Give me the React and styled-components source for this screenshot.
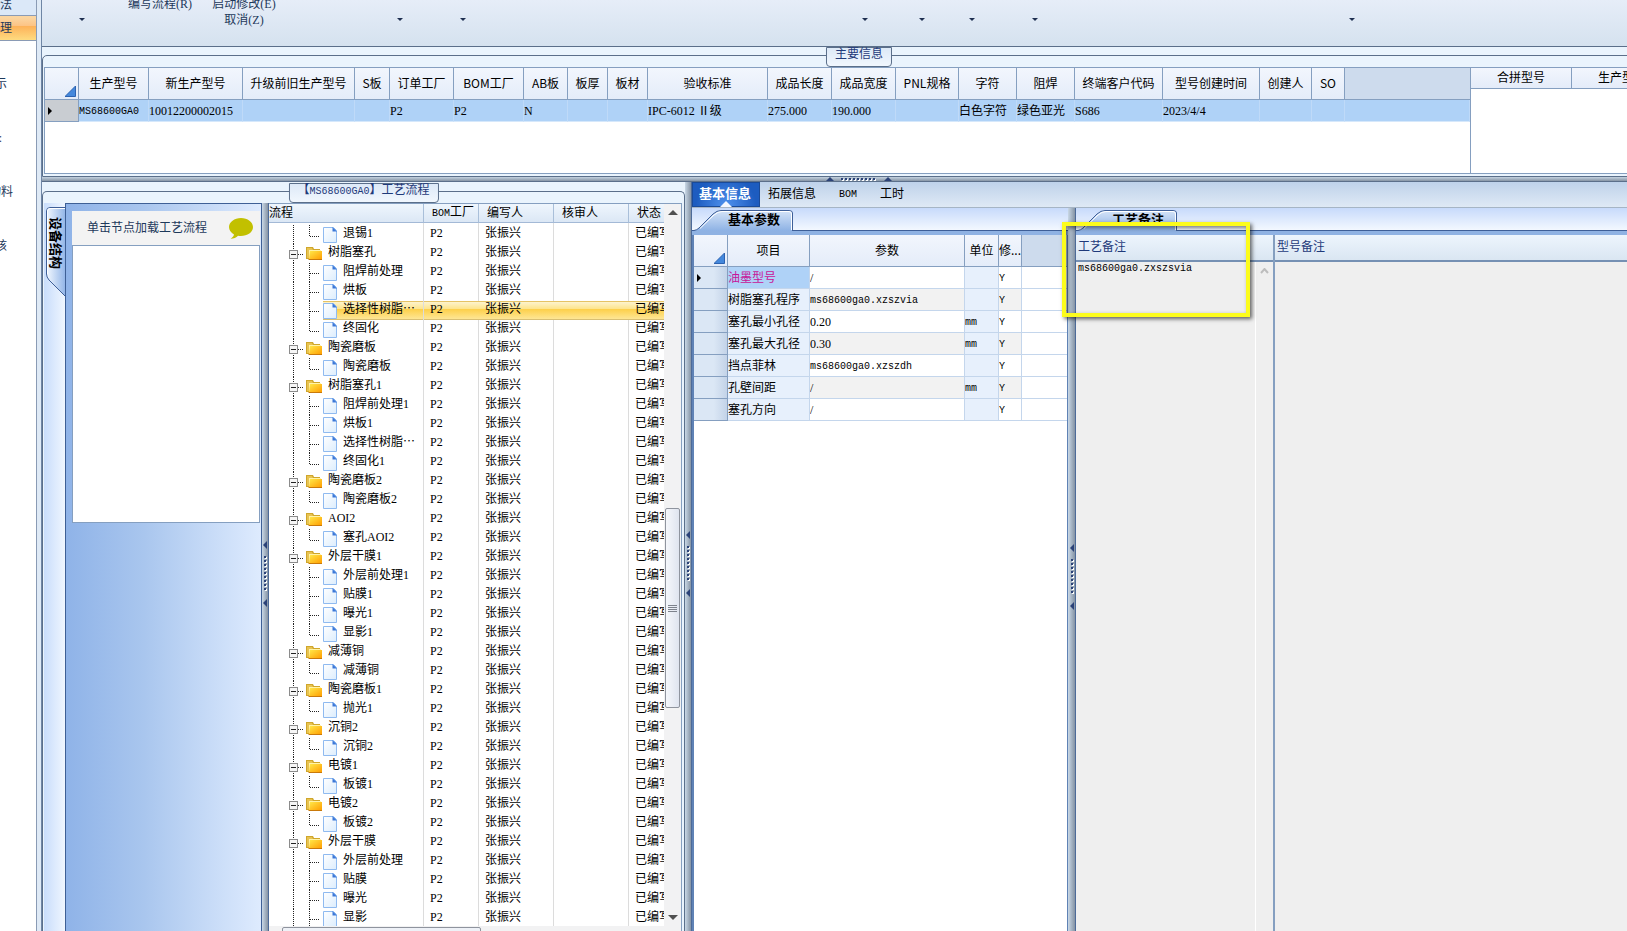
import React, { useState } from 'react';
import styled, { createGlobalStyle, css } from 'styled-components';

const ribbonGroups = [
  { width: 74 },
  { width: 88, lines: ['编写流程(R)'] },
  { width: 80, lines: ['启动修改(E)', '取消(Z)'] },
];

const ribbonArrows = [82, 400, 463, 865, 922, 972, 1035, 1352];

const sideItems = [
  { text: '示', pad: 29 },
  { text: ':', pad: 34 },
  { text: '物料', pad: 23 },
  { text: '核', pad: 29 },
];

const mainColumns = [
  { title: '生产型号', width: 70, value: 'MS68600GA0', code: true },
  { title: '新生产型号', width: 94, value: '10012200002015' },
  { title: '升级前旧生产型号', width: 112, value: '' },
  { title: 'S板', width: 35, value: '' },
  { title: '订单工厂', width: 64, value: 'P2' },
  { title: 'BOM工厂', width: 70, value: 'P2' },
  { title: 'AB板', width: 44, value: 'N' },
  { title: '板厚', width: 40, value: '' },
  { title: '板材', width: 40, value: '' },
  { title: '验收标准', width: 120, value: 'IPC-6012 Ⅱ级' },
  { title: '成品长度', width: 64, value: '275.000' },
  { title: '成品宽度', width: 64, value: '190.000' },
  { title: 'PNL规格', width: 63, value: '' },
  { title: '字符', width: 58, value: '白色字符' },
  { title: '阻焊', width: 58, value: '绿色亚光' },
  { title: '终端客户代码', width: 88, value: 'S686' },
  { title: '型号创建时间', width: 97, value: '2023/4/4' },
  { title: '创建人', width: 52, value: '' },
  { title: 'SO', width: 33, value: '' },
];

const flow = [
  { name: null, children: ['退锡1'] },
  { name: '树脂塞孔', children: ['阻焊前处理', '烘板', '选择性树脂⋯', '终固化'], selected: 2 },
  { name: '陶瓷磨板', children: ['陶瓷磨板'] },
  { name: '树脂塞孔1', children: ['阻焊前处理1', '烘板1', '选择性树脂⋯', '终固化1'] },
  { name: '陶瓷磨板2', children: ['陶瓷磨板2'] },
  { name: 'AOI2', children: ['塞孔AOI2'] },
  { name: '外层干膜1', children: ['外层前处理1', '贴膜1', '曝光1', '显影1'] },
  { name: '减薄铜', children: ['减薄铜'] },
  { name: '陶瓷磨板1', children: ['抛光1'] },
  { name: '沉铜2', children: ['沉铜2'] },
  { name: '电镀1', children: ['板镀1'] },
  { name: '电镀2', children: ['板镀2'] },
  { name: '外层干膜', children: ['外层前处理', '贴膜', '曝光', '显影'], open: true },
];

const params = [
  { name: '油墨型号', value: '/', unit: '' },
  { name: '树脂塞孔程序', value: 'ms68600ga0.xzszvia', unit: '' },
  { name: '塞孔最小孔径', value: '0.20', unit: 'mm' },
  { name: '塞孔最大孔径', value: '0.30', unit: 'mm' },
  { name: '挡点菲林', value: 'ms68600ga0.xzszdh', unit: '' },
  { name: '孔壁间距', value: '/', unit: 'mm' },
  { name: '塞孔方向', value: '/', unit: '' },
];

// flatten groups to table rows
const flowRows = flow.flatMap((group, g) => {
  const rows = group.children.map((name, i) => ({
    key: `${g}-${i}`,
    name,
    last: i === group.children.length - 1 && !group.open,
    selected: group.selected === i,
  }));
  return group.name
    ? [{ key: `${g}`, name: group.name, folder: true }, ...rows]
    : rows;
});

function FolderIcon() {
  return (
    <svg width="16" height="14" viewBox="0 0 16 14">
      <defs>
        <linearGradient id="folder" x1="0" y1="0" x2="1" y2="1">
          <stop offset="0" stopColor="#ffe94a" />
          <stop offset="1" stopColor="#ff9c00" />
        </linearGradient>
      </defs>
      <path d="M0 1h7l1 2h6v3H3v7H0z" fill="#cfa62b" />
      <path d="M1 2h5l1 2h6v2H3v6H1z" fill="#e8c352" />
      <path d="M3 4h12v9H3z" fill="#fff3a8" />
      <path d="M4 5h12v8.500H3z" fill="url(#folder)" />
      <path d="M3 13h13v1H2z" fill="#c9790a" />
    </svg>
  );
}

function DocIcon() {
  return (
    <svg width="14" height="16" viewBox="0 0 14 16">
      <defs>
        <linearGradient id="doc" x1="0" y1="0" x2="1" y2="1">
          <stop offset="0" stopColor="#fff" />
          <stop offset="1" stopColor="#dcedfd" />
        </linearGradient>
      </defs>
      <path d="M.5 .5h10l3 3v12H.5z" fill="url(#doc)" stroke="#8fbaf0" />
      <path d="M9.500 0L14 4.500H9.500z" fill="#3c78d8" />
    </svg>
  );
}

function Guide({ folder, last }) {
  const dots = { stroke: '#222', strokeDasharray: '1 1', shapeRendering: 'crispEdges' };
  return (
    <svg width={folder ? 37 : 54} height="19">
      <path d="M24.500 0v19" {...dots} />
      {folder ? (
        <>
          <path d="M29 10.500h6" {...dots} />
          <rect x="20.500" y="6.500" width="8" height="8" fill="#f6f6f6" stroke="#8b8b8b" />
          <path d="M22 10.500h5" stroke="#222" />
        </>
      ) : (
        <path d={last ? 'M40.500 0v11M41 11.500h9' : 'M40.500 0v19M41 10.500h9'} {...dots} />
      )}
    </svg>
  );
}

function TabShape({ id }) {
  return (
    <svg width="101" height="21" viewBox="0 0 101 21">
      <defs>
        <linearGradient id={id} x1="0" y1="0" x2="0" y2="1">
          <stop offset="0" stopColor="#d5e4f8" />
          <stop offset="1" stopColor="#8db1e4" />
        </linearGradient>
      </defs>
      <path d="M0 20.500h2Q5 20 7 18L21 4Q25 .5 29 .5H97Q100.500.500 100.500 3V21H0z" fill={`url(#${id})`} />
      <path d="M0 20.500h2Q5 20 7 18L21 4Q25 .5 29 .5H97Q100.500.500 100.500 3V21" fill="none" stroke="#3e5f98" />
      <path d="M8 18.500L22 5Q26 1.500 30 1.500H97Q99.500 1.500 99.500 4V20" fill="none" stroke="#fff" />
    </svg>
  );
}

function Grip({ horizontal }) {
  return (
    <GripSvg width={horizontal ? 66 : 6} height={horizontal ? 6 : 66} viewBox={horizontal ? '0 0 66 6' : '0 0 6 66'}>
      <g transform={horizontal ? 'matrix(0 1 1 0 0 0)' : undefined}>
        <path d="M1 4l4-4v8zM1 62l4-4v8z" fill="#2b4278" />
        <path d="M4 16v35" stroke="#fff" strokeWidth="2" strokeDasharray="2 2" />
        <path d="M3 15v35" stroke="#2b4278" strokeWidth="2" strokeDasharray="2 2" />
      </g>
    </GripSvg>
  );
}

function Corner() {
  return (
    <svg width="11" height="11">
      <path d="M10.500 0v10.500H0z" fill="#4488dc" stroke="#2c62b0" />
    </svg>
  );
}

function Pointer() {
  return (
    <svg width="5" height="8">
      <path d="M0 0l4 4-4 4z" fill="#000" />
    </svg>
  );
}

function App() {
  const [tab, setTab] = useState('基本信息');
  return (
    <Page>
      <GlobalStyle />
      <SideBar>
        <SideHead>法</SideHead>
        <SideHead $active>理</SideHead>
        {sideItems.map((item) => (
          <SideItem key={item.text} $pad={item.pad}>
            {item.text}
          </SideItem>
        ))}
      </SideBar>
      <Main>
        <Ribbon>
          {ribbonGroups.map((group, i) => (
            <RibbonGroup key={i} $width={group.width}>
              {(group.lines || []).map((line) => (
                <RibbonButton key={line}>{line}</RibbonButton>
              ))}
            </RibbonGroup>
          ))}
          {ribbonArrows.map((x) => (
            <DropArrow key={x} aria-label="展开" style={{ left: x - 45 }} />
          ))}
        </Ribbon>

        <TopGroup>
          <TopFrame>
            <Caption>主要信息</Caption>
            <GridBox>
              <Grid>
                <colgroup>
                  <Col $width={34} />
                  {mainColumns.map((c) => (
                    <Col key={c.title} $width={c.width} />
                  ))}
                  <col />
                </colgroup>
                <thead>
                  <tr>
                    <HeadCorner>
                      <Corner />
                    </HeadCorner>
                    {mainColumns.map((c) => (
                      <HeadCell key={c.title}>{c.title}</HeadCell>
                    ))}
                    <HeadFill />
                  </tr>
                </thead>
                <tbody>
                  <tr>
                    <MainRowHead>
                      <Pointer />
                    </MainRowHead>
                    {mainColumns.map((c) => (
                      <MainCell key={c.title}>
                        {c.code ? <Code>{c.value}</Code> : c.value}
                      </MainCell>
                    ))}
                    <MainCell />
                  </tr>
                </tbody>
              </Grid>
            </GridBox>
            <MergeBox>
              <Grid>
                <thead>
                  <tr>
                    <HeadCell $short>合拼型号</HeadCell>
                    <HeadCell $short>生产型号</HeadCell>
                  </tr>
                </thead>
              </Grid>
            </MergeBox>
          </TopFrame>
        </TopGroup>

        <HSplitter>
          <Grip horizontal />
        </HSplitter>

        <Lower>
          <LeftGroup>
            <LeftFrame>
              <Caption>
                【<Code>MS68600GA0</Code>】工艺流程
              </Caption>
              <TabStrip>
                <VTab>
                  <svg width="19" height="91" viewBox="0 0 19 91">
                    <defs>
                      <linearGradient id="vtab">
                        <stop offset="0" stopColor="#f2f8ff" />
                        <stop offset="1" stopColor="#8fb3e7" />
                      </linearGradient>
                    </defs>
                    <path d="M20 .5H4Q.5.500.500 4V67Q.5 70 3 73L20 90" fill="url(#vtab)" stroke="#3e5f98" />
                    <path d="M20 1.500H4Q1.500 1.500 1.500 4V67" fill="none" stroke="#fff" />
                  </svg>
                  <span>设备结构</span>
                </VTab>
              </TabStrip>
              <Structure>
                <NodeBox>
                  <NodeHead>
                    <span>单击节点加载工艺流程</span>
                    <svg width="24" height="21" viewBox="0 0 24 21">
                      <path d="M12 0C5.400 0 0 4 0 9c0 3.200 2 5.800 5 7.500C4.600 18.500 3 20 1.500 20.800 4.500 20.800 7.500 19.500 9 17.700 17 18.800 24 15 24 9 24 4 18.600 0 12 0z" fill="#c2c000" />
                    </svg>
                  </NodeHead>
                  <NodeBody />
                </NodeBox>
              </Structure>
              <VSplitter>
                <Grip />
              </VSplitter>
              <TreeBox>
                <TreeView>
                  <Grid>
                    <colgroup>
                      <Col $width={155} />
                      <Col $width={55} />
                      <Col $width={75} />
                      <Col $width={75} />
                      <col />
                    </colgroup>
                    <thead>
                      <tr>
                        <TreeHead $first>流程</TreeHead>
                        <TreeHead>
                          <Code>BOM</Code>工厂
                        </TreeHead>
                        <TreeHead>编写人</TreeHead>
                        <TreeHead>核审人</TreeHead>
                        <TreeHead>状态</TreeHead>
                      </tr>
                    </thead>
                    <tbody>
                      <TreeSpacer>
                        <td />
                        <td />
                        <td />
                        <td />
                        <td />
                      </TreeSpacer>
                      {flowRows.map((row) => (
                        <TreeRow key={row.key} $selected={row.selected}>
                          <td>
                            <Node>
                              <Guide folder={row.folder} last={row.last} />
                              <NodeLabel $selected={row.selected}>
                                {row.folder ? <FolderIcon /> : <DocIcon />}
                                {row.name}
                              </NodeLabel>
                            </Node>
                          </td>
                          <td>P2</td>
                          <td>张振兴</td>
                          <td />
                          <td>已编写</td>
                        </TreeRow>
                      ))}
                    </tbody>
                  </Grid>
                  <VScroll>
                    <ScrollArrow $up aria-label="向上" />
                    <ScrollThumb>
                      <i />
                      <i />
                      <i />
                      <i />
                    </ScrollThumb>
                    <ScrollArrow aria-label="向下" />
                  </VScroll>
                </TreeView>
                <HScroll>
                  <div />
                </HScroll>
              </TreeBox>
            </LeftFrame>
          </LeftGroup>
          <VSplitter>
            <Grip />
          </VSplitter>

          <Detail>
            <TabBar>
              {['基本信息', '拓展信息', 'BOM', '工时'].map((name) => (
                <BarTab key={name} $active={tab === name} onClick={() => setTab(name)}>
                  {name === 'BOM' ? <Code>{name}</Code> : name}
                </BarTab>
              ))}
            </TabBar>
            <Panes>
              <ParamPane>
                <PaneTabs>
                  <PaneTab>
                    <TabShape id="paramTab" />
                    <span>基本参数</span>
                  </PaneTab>
                </PaneTabs>
                <ParamBox>
                  <Grid>
                    <colgroup>
                      <Col $width={34} />
                      <Col $width={82} />
                      <Col $width={155} />
                      <Col $width={34} />
                      <Col $width={23} />
                      <col />
                    </colgroup>
                    <thead>
                      <tr>
                        <HeadCorner>
                          <Corner />
                        </HeadCorner>
                        <HeadCell>项目</HeadCell>
                        <HeadCell>参数</HeadCell>
                        <HeadCell>单位</HeadCell>
                        <HeadCell>修...</HeadCell>
                        <HeadFill />
                      </tr>
                    </thead>
                    <tbody>
                      {params.map((p, i) => (
                        <ParamRow key={p.name} $current={i === 0}>
                          <th>{i === 0 && <Pointer />}</th>
                          <td>{p.name}</td>
                          <td>{p.value.startsWith('ms') ? <Code>{p.value}</Code> : p.value}</td>
                          <td>
                            <Code>{p.unit}</Code>
                          </td>
                          <td>
                            <Code>Y</Code>
                          </td>
                          <td />
                        </ParamRow>
                      ))}
                    </tbody>
                  </Grid>
                </ParamBox>
              </ParamPane>
              <VSplitter $wide>
                <Grip />
              </VSplitter>
              <NotePane>
                <PaneTabs>
                  <PaneTab>
                    <TabShape id="noteTab" />
                    <span>工艺备注</span>
                  </PaneTab>
                </PaneTabs>
                <Notes>
                  <NoteColumn $narrow>
                    <NoteHead htmlFor="craft-note">工艺备注</NoteHead>
                    <NoteBody>
                      <NoteText id="craft-note" defaultValue="ms68600ga0.zxszsvia" />
                      <NoteScroll>
                        <svg width="9" height="6">
                          <path d="M1 5l3.500-4L8 5" fill="none" stroke="#bdbdbd" strokeWidth="2" />
                        </svg>
                      </NoteScroll>
                    </NoteBody>
                  </NoteColumn>
                  <NoteColumn>
                    <NoteHead htmlFor="model-note">型号备注</NoteHead>
                    <NoteBody>
                      <NoteText id="model-note" defaultValue="" />
                    </NoteBody>
                  </NoteColumn>
                </Notes>
                <Highlight />
              </NotePane>
            </Panes>
          </Detail>
        </Lower>
      </Main>
    </Page>
  );
}

const GlobalStyle = createGlobalStyle`
  * {
    box-sizing: border-box;
  }
  body {
    margin: 0;
    overflow: hidden;
    font-family: "Liberation Serif", "Noto Sans CJK SC", sans-serif;
    font-size: 12px;
    line-height: 18px;
    color: #000;
  }
  button {
    font: inherit;
    color: inherit;
    padding: 0;
    border: none;
    background: none;
  }
  svg {
    display: block;
    flex: none;
  }
`;

const Page = styled.div`
  display: flex;
  height: 100vh;
  background: #dfeaf6;
`;

const Code = styled.span`
  font-family: "Liberation Mono", monospace;
  font-size: 10px;
`;

const SideBar = styled.nav`
  flex: 0 0 37px;
  margin-right: 4px;
  overflow: hidden;
  background: #fff;
  border-right: 1px solid #8a9bb5;
`;

const SideHead = styled.button`
  display: flex;
  justify-content: flex-end;
  align-items: center;
  width: 100%;
  height: 16px;
  padding: 0 24px 6px 0;
  color: #1e395b;
  background: #dbe8f8;
  border-bottom: 1px solid #8a9bb5;
  ${(props) =>
    props.$active &&
    css`
      height: 25px;
      padding-bottom: 0;
      background: linear-gradient(#fbd5a0 0 8%, #fcc486 40%, #fdb158 41%, #fedb80);
    `}
`;

const SideItem = styled.button`
  display: flex;
  justify-content: flex-end;
  width: 100%;
  margin: 34px 0 36px;
  padding-right: ${(props) => props.$pad}px;
  white-space: nowrap;
  color: #1e395b;
  & + & {
    margin-top: 0;
  }
`;

const Main = styled.main`
  flex: 1;
  min-width: 0;
  display: flex;
  flex-direction: column;
  overflow: hidden;
  border-left: 1px solid #6f86a5;
`;

const Ribbon = styled.header`
  position: relative;
  display: flex;
  height: 46px;
  overflow: hidden;
  background: linear-gradient(#e6edf8, #d5e2ef);
`;

const RibbonGroup = styled.div`
  flex: 0 0 ${(props) => props.$width}px;
  display: flex;
  flex-direction: column;
  align-items: center;
  margin-top: -4px;
`;

const RibbonButton = styled.button`
  height: 16px;
  line-height: 16px;
  white-space: nowrap;
  color: #1e395b;
`;

const DropArrow = styled.button`
  position: absolute;
  top: 18px;
  width: 0;
  height: 0;
  border: 3px solid transparent;
  border-top-color: #1e2f50;
  border-bottom: 0;
`;

const TopGroup = styled.section`
  display: flex;
  height: 131px;
  margin-right: -49px;
  padding-top: 8px;
  background: #eaf4fd;
  border-top: 1px solid #5b6f8a;
`;

const frame = css`
  position: relative;
  flex: 1;
  min-width: 0;
  display: flex;
  border: 1px solid #5b6f8a;
  border-radius: 5px 5px 0 0;
`;

const TopFrame = styled.div`
  ${frame}
  padding: 11px 1px 2px;
`;

const Caption = styled.h2`
  position: absolute;
  top: -9px;
  left: 50%;
  transform: translateX(-50%);
  height: 20px;
  margin: 0;
  padding: 0 8px;
  white-space: nowrap;
  font-size: 12px;
  font-weight: 400;
  line-height: 13px;
  color: #1f3a7a;
  background: linear-gradient(#dde9f7, #f1f7fe);
  border: 1px solid #5b6f8a;
  border-radius: 0 0 4px 4px;
`;

const GridBox = styled.div`
  flex: 1;
  min-width: 0;
  background: #fff;
  border: 1px solid #859fc0;
`;

const MergeBox = styled.div`
  flex: 0 0 203px;
  background: #fff;
  border: 1px solid #859fc0;
  border-left: 0;
`;

const Grid = styled.table`
  width: 100%;
  table-layout: fixed;
  border-collapse: separate;
  border-spacing: 0;
  td,
  th {
    padding: 0;
    overflow: hidden;
    white-space: nowrap;
  }
`;

const Col = styled.col`
  width: ${(props) => props.$width}px;
`;

const HeadCell = styled.th`
  height: ${(props) => (props.$short ? 21 : 32)}px;
  font-family: "Noto Sans CJK SC", sans-serif;
  font-weight: 400;
  text-align: center;
  background: linear-gradient(#f2f6fd, #e4ecf9);
  border-right: 1px solid #859fc0;
  border-bottom: 1px solid #859fc0;
  ${Grid} && {
    padding-bottom: 2px;
  }
`;

const HeadFill = styled(HeadCell)`
  background: #cddbed;
  border-right: 0;
`;

const HeadCorner = styled(HeadCell)`
  vertical-align: bottom;
  svg {
    margin: 0 2px 0 auto;
  }
`;

const MainRowHead = styled.th`
  height: 22px;
  background: #c9cdd2;
  border-right: 1px solid #859fc0;
  border-bottom: 1px solid #859fc0;
  svg {
    margin-left: 3px;
  }
`;

const MainCell = styled.td`
  background: #afd2f7;
  border-right: 1px solid #bfdaf8;
  border-bottom: 1px solid #d6e8fb;
`;

const splitter = css`
  display: flex;
  align-items: center;
  justify-content: center;
`;

const HSplitter = styled.div`
  ${splitter}
  height: 4px;
  flex: none;
  margin-right: -49px;
  background: linear-gradient(#c4d2e0, #8795a5);
`;

const VSplitter = styled.div`
  ${splitter}
  flex: 0 0 ${(props) => (props.$wide ? 8 : 6)}px;
  padding-top: 14px;
  border-right: 1px solid #4d6b99;
  background: linear-gradient(90deg, #c9d8e6, #8593a4);
`;

const GripSvg = styled.svg`
  position: relative;
  z-index: 1;
`;

const Lower = styled.div`
  flex: 1;
  min-height: 0;
  display: flex;
  border-top: 1px solid #5b6f8a;
`;

const LeftGroup = styled.section`
  flex: 0 0 643px;
  display: flex;
  padding-top: 9px;
  background: #eaf4fd;
`;

const LeftFrame = styled.div`
  ${frame}
  padding: 11px 2px 0 1px;
  border-bottom: 0;
`;

const TabStrip = styled.div`
  flex: 0 0 22px;
  padding: 4px 0 0 2px;
  background: linear-gradient(90deg, #c9ddfb, #eff6ff);
  border-right: 1px solid #3e6096;
`;

const VTab = styled.button`
  display: block;
  position: relative;
  width: 19px;
  font-weight: 700;
  span {
    position: absolute;
    top: 10px;
    left: 0;
    writing-mode: vertical-rl;
    text-orientation: sideways;
    font-size: 13px;
  }
`;

const Structure = styled.div`
  flex: 0 0 196px;
  padding: 7px 1px 0 6px;
  background: linear-gradient(90deg, #8fb3e8, #a9c6ee 40%, #deebfe);
  border-top: 1px solid #3e6096;
  border-right: 1px solid #3e6096;
`;

const NodeBox = styled.div`
  height: 312px;
  display: flex;
  flex-direction: column;
`;

const NodeHead = styled.div`
  display: flex;
  align-items: center;
  justify-content: space-between;
  height: 34px;
  padding: 0 7px 0 15px;
  color: #1e395b;
  background: #f3f3f3;
`;

const NodeBody = styled.div`
  flex: 1;
  background: #fff;
  border: 1px solid #859fc0;
`;

const TreeBox = styled.div`
  flex: 1;
  min-width: 0;
  display: flex;
  flex-direction: column;
  background: #fff;
  border-top: 1px solid #859fc0;
  border-right: 1px solid #859fc0;
`;

const TreeView = styled.div`
  flex: 1;
  min-height: 0;
  display: flex;
  overflow: hidden;
  table {
    flex: none;
    width: calc(100% - 17px);
    align-self: flex-start;
  }
`;

const TreeHead = styled.th`
  height: 18px;
  font-weight: 400;
  line-height: 17px;
  text-align: left;
  background: linear-gradient(#eff6fd, #dbe7f5);
  border-right: 1px solid #a9bfd9;
  border-bottom: 1px solid #a3b9d6;
  &:last-child {
    border-right: 0;
  }
  ${Grid} && {
    padding-left: ${(props) => (props.$first ? 0 : 8)}px;
  }
`;

const treeCells = css`
  td {
    border-right: 1px solid #dcdcdc;
  }
  td:last-child {
    border-right: 0;
  }
`;

const TreeSpacer = styled.tr`
  height: 2px;
  ${treeCells}
`;

const gold = 'linear-gradient(#e5c365 0 1px, #fdf3cd 1px, #fde58e 40%, #fdcf48 42%, #fee694 94%, #d9bf73 95%)';

const TreeRow = styled.tr`
  height: 19px;
  ${treeCells}
  ${Grid} & td + td {
    padding-left: 6px;
    line-height: 17px;
    vertical-align: top;
    background: ${(props) => (props.$selected ? gold : 'none')};
    border-right-color: ${(props) => (props.$selected ? 'transparent' : '#dcdcdc')};
  }
`;

const Node = styled.div`
  display: flex;
  height: 19px;
`;

const NodeLabel = styled.span`
  flex: 1;
  display: flex;
  align-items: flex-start;
  gap: 6px;
  line-height: 17px;
  background: ${(props) => (props.$selected ? gold : 'none')};
  svg {
    margin-top: 2px;
  }
`;

const VScroll = styled.div`
  flex: 0 0 17px;
  display: flex;
  flex-direction: column;
  align-items: center;
  padding: 6px 0;
  background: #f2f2f3;
`;

const ScrollArrow = styled.button`
  width: 0;
  height: 0;
  border: 5px solid transparent;
  ${(props) =>
    props.$up
      ? css`
          border-top: 0;
          border-bottom-color: #505050;
        `
      : css`
          margin-top: auto;
          border-bottom: 0;
          border-top-color: #505050;
        `}
`;

const ScrollThumb = styled.div`
  display: flex;
  flex-direction: column;
  align-items: center;
  justify-content: center;
  gap: 1px;
  width: 15px;
  height: 200px;
  margin-top: 293px;
  background: linear-gradient(90deg, #f5f7fb, #dfe4ef);
  border: 1px solid #8f949e;
  border-radius: 2px;
  i {
    width: 9px;
    height: 1px;
    background: #7d828c;
  }
`;

const HScroll = styled.div`
  flex: 0 0 5px;
  padding: 1px 0 0 13px;
  overflow: hidden;
  background: #f2f2f3;
  div {
    width: 199px;
    height: 15px;
    background: #eef1f7;
    border: 1px solid #8f949e;
    border-radius: 2px;
  }
`;

const Detail = styled.section`
  flex: 1;
  min-width: 0;
  display: flex;
  flex-direction: column;
`;

const TabBar = styled.div`
  display: flex;
  height: 26px;
  background: linear-gradient(#bed2ea, #dfe9f5);
  border-bottom: 1px solid #a6b5c5;
`;

const BarTab = styled.button`
  position: relative;
  height: 25px;
  padding: 0 8px 2px;
  margin-right: 6px;
  & + & {
    margin-right: 7px;
  }
  ${(props) =>
    props.$active &&
    css`
      margin-right: 0;
      padding: 0 8px 2px 6px;
      font-size: 13px;
      font-weight: 700;
      color: #fff;
      background: radial-gradient(circle at 50% 100%, #4f92ee, #1d5cc0 75%);
      border: 1px solid #1a4a98;
      &::after {
        content: '';
        position: absolute;
        left: 50%;
        bottom: -1px;
        margin-left: -6px;
        border: 6px solid transparent;
        border-top: 0;
        border-bottom-color: #f4f8ff;
      }
    `}
`;

const Panes = styled.div`
  flex: 1;
  min-height: 0;
  display: flex;
`;

const ParamPane = styled.div`
  flex: 0 0 376px;
  display: flex;
  flex-direction: column;
`;

const PaneTabs = styled.div`
  flex: none;
  display: flex;
  align-items: flex-end;
  height: 27px;
  padding-bottom: 4px;
  background: linear-gradient(#8fb2e3, #8fb2e3) bottom / 100% 4px no-repeat,
    linear-gradient(#3e5f98, #3e5f98) 0 22px / 100% 1px no-repeat,
    linear-gradient(#c7dafb, #f3f8ff 22px);
`;

const PaneTab = styled.button`
  position: relative;
  font-size: 13px;
  font-weight: 700;
  span {
    position: absolute;
    top: 1px;
    left: 36px;
    white-space: nowrap;
  }
`;

const ParamBox = styled.div`
  flex: 1;
  background: #fff;
  border: 1px solid #5f82b5;
  border-width: 0 1px 0 2px;
`;

const ParamRow = styled.tr`
  height: 22px;
  th,
  td {
    border-right: 1px solid #c4d6ec;
    border-bottom: 1px solid #c4d6ec;
  }
  th {
    background: linear-gradient(90deg, #dbe7f5 60%, #c3d3e8);
    border-color: #859fc0;
  }
  th svg {
    margin-left: 3px;
  }
  td:nth-child(3),
  td:nth-child(5) {
    background: #fff;
  }
  &:nth-child(even) td:nth-child(3),
  &:nth-child(even) td:nth-child(5) {
    background: #f2f2f2;
  }
  td:nth-child(2),
  td:nth-child(4) {
    background: #e7f0fc;
  }
  td:nth-child(6) {
    border-right: 0;
  }
  ${(props) =>
    props.$current &&
    css`
      && td:nth-child(2) {
        color: #c71598;
        background: #afd2f7;
      }
    `}
`;

const NotePane = styled.div`
  position: relative;
  flex: 1;
  min-width: 0;
  display: flex;
  flex-direction: column;
`;

const Notes = styled.div`
  flex: 1;
  min-height: 0;
  display: flex;
  background: #efefef;
`;

const NoteColumn = styled.div`
  flex: ${(props) => (props.$narrow ? '0 0 199px' : 1)};
  display: flex;
  flex-direction: column;
  border-right: ${(props) => (props.$narrow ? '2px solid #859fc0' : 0)};
`;

const NoteHead = styled.label`
  flex: none;
  height: 27px;
  padding-left: 2px;
  line-height: 24px;
  color: #1f3a7a;
  background: linear-gradient(#edf5fd, #dae6f2);
  border-bottom: 2px solid #7590b3;
`;

const NoteBody = styled.div`
  flex: 1;
  display: flex;
`;

const NoteText = styled.textarea`
  flex: 1;
  min-width: 0;
  padding: 0 2px;
  resize: none;
  border: 0;
  outline: none;
  background: transparent;
  font-family: "Liberation Mono", "Noto Sans CJK SC", monospace;
  font-size: 10px;
  line-height: 13px;
`;

const NoteScroll = styled.div`
  flex: 0 0 18px;
  padding: 6px 4px;
  border-left: 1px solid #fff;
`;

// marks the note field over the pane
const Highlight = styled.div`
  position: absolute;
  z-index: 2;
  top: 14px;
  left: -14px;
  width: 188px;
  height: 95px;
  pointer-events: none;
  border: 4px solid #fcfc1c;
  box-shadow: 2px 2px 4px rgba(0, 0, 0, 0.6), inset 2px 2px 4px rgba(0, 0, 0, 0.5);
`;

export default App;
